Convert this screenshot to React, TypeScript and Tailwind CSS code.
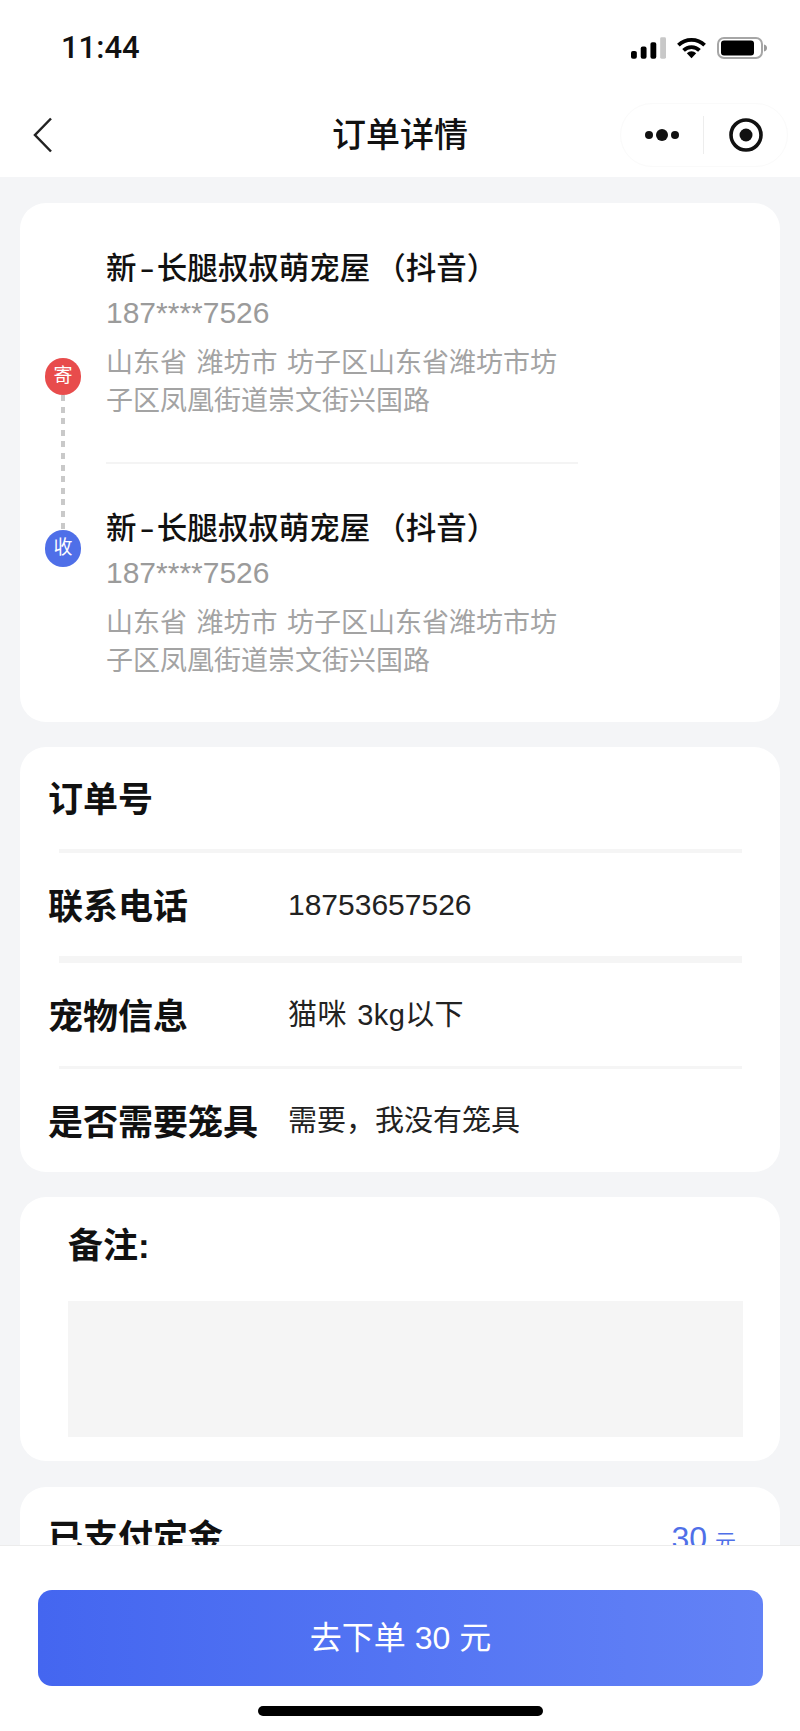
const font = "font-['Liberation_Sans','Noto_Sans_CJK_SC',sans-serif]"

const rows = [
  { label: "订单号", value: "", valueStyle: "text-[29px]", height: "h-[102px]", line: "h-1" },
  { label: "联系电话", value: "18753657526", valueStyle: "text-[30px]", height: "h-[103px]", line: "h-[7px]" },
  { label: "宠物信息", value: "猫咪 3kg以下", valueStyle: "pt-[2px] text-[29px] tracking-[0.4px] [word-spacing:2px]", height: "h-[103px]", line: "h-[3px]" },
  { label: "是否需要笼具", value: "需要，我没有笼具", valueStyle: "pt-[2px] text-[29px]", height: "h-[103px]", line: "" },
]

function StatusIcons() {
  return (
    <div className="flex items-center gap-[11px]">
      <svg width="35" height="22" viewBox="0 0 36 22">
        <rect x="0" y="14" width="6" height="8" rx="2" fill="#000" />
        <rect x="10" y="9.500" width="6" height="12.500" rx="2" fill="#000" />
        <rect x="20" y="5" width="6" height="17" rx="2" fill="#000" />
        <rect x="30" y="0" width="6" height="22" rx="1.500" fill="#c8c8c8" />
      </svg>
      <svg width="29" height="22" viewBox="0 0 31 22">
        <path d="M1.500 8a20 20 0 0 1 28 0" fill="none" stroke="#000" strokeWidth="4" />
        <path d="M7 13.500a12 12 0 0 1 17 0" fill="none" stroke="#000" strokeWidth="4" />
        <path d="M15.500 22l-5-5.500a7 7 0 0 1 10 0z" fill="#000" />
      </svg>
      <svg width="50" height="22" viewBox="0 0 50 22">
        <rect x="1" y="1" width="44" height="20" rx="6" fill="none" stroke="#a6a6a6" strokeWidth="2" />
        <rect x="4" y="3.500" width="33" height="15" rx="3" fill="#000" />
        <path d="M47 7.500c2 .6 3 1.800 3 3.500s-1 2.900-3 3.500z" fill="#9a9a9a" />
      </svg>
    </div>
  )
}

function Capsule() {
  return (
    <div className="flex h-16 w-[168px] items-center rounded-full border border-[#fafafa] bg-white">
      <div className="flex w-[82px] items-center justify-center gap-[3px]">
        <span className="size-2 rounded-full bg-[#111]" />
        <span className="size-3 rounded-full bg-[#111]" />
        <span className="size-2 rounded-full bg-[#111]" />
      </div>
      <div className="h-[38px] w-px bg-[#ededed]" />
      <div className="flex flex-1 items-center justify-center">
        <svg width="34" height="34" viewBox="0 0 34 34">
          <circle cx="17" cy="17" r="15" fill="none" stroke="#111" strokeWidth="3.600" />
          <circle cx="17" cy="17" r="6.500" fill="#111" />
        </svg>
      </div>
    </div>
  )
}

function Address() {
  return (
    <div>
      <div className="text-[30.5px] leading-10 font-medium text-[#111]">
        新<span className="mx-[5px] inline-block scale-x-150">-</span>长腿叔叔萌宠屋
        <span className="ml-[5px]">（</span>抖音）
      </div>
      <div className="mt-[5px] text-[30px] leading-10 text-[#9b9b9b]">187****7526</div>
      <div className="mt-[11px] w-[460px] text-[27px] leading-[38px] text-[#a3a3a3] [word-spacing:2px]">
        山东省 潍坊市 坊子区山东省潍坊市坊子区凤凰街道崇文街兴国路
      </div>
    </div>
  )
}

export default function App() {
  return (
    <div className={`flex h-[1731px] w-[800px] flex-col overflow-hidden bg-[#f4f5f7] ${font}`}>
      <header className="h-[177px] shrink-0 bg-white">
        <div className="flex h-[96px] items-center justify-between pr-[33px] pl-[61px]">
          <span className="font-['Roboto'] text-[31px] font-medium text-[#111]">11:44</span>
          <StatusIcons />
        </div>
        <div className="relative mt-[7px] flex h-16 items-center justify-between pr-3 pl-[33px]">
          <svg width="20" height="36" viewBox="0 0 20 36" fill="none">
            <path d="M18 1.500L2 18l16 16.500" stroke="#222" strokeWidth="2.500" />
          </svg>
          <span className="absolute left-1/2 -translate-x-1/2 text-[34px] font-medium text-[#111]">订单详情</span>
          <Capsule />
        </div>
      </header>

      <main className="min-h-0 flex-1 overflow-hidden pt-[26px] pl-5">
        <div className="flex w-[760px] flex-col gap-[25px]">
          <section className="relative rounded-[26px] bg-white pt-[45px] pb-[42px] pl-[86px]">
            <div className="absolute top-[155px] left-[25px] flex h-[209px] w-9 flex-col items-center">
              <span className="flex h-[37px] w-9 shrink-0 items-center justify-center rounded-full bg-[#e84c4c] text-[19px] text-white">寄</span>
              <span className="w-1 flex-1 bg-[repeating-linear-gradient(to_bottom,#c9c9c9_0,#c9c9c9_6px,transparent_6px,transparent_11.6px)]" />
              <span className="flex h-[37px] w-9 shrink-0 items-center justify-center rounded-full bg-[#4f6fe8] text-[19px] text-white">收</span>
            </div>
            <Address />
            <div className="mt-[42px] mb-11 h-[2px] w-[472px] bg-[#f4f4f4]" />
            <Address />
          </section>

          <section className="h-[425px] rounded-[26px] bg-white">
            {rows.map((row) => (
              <div key={row.label}>
                <div className={`flex items-center pl-7 ${row.height}`}>
                  <span className="w-[240px] shrink-0 pt-[5px] text-[35px] font-semibold text-[#111]">{row.label}</span>
                  <span className={`text-[#222] ${row.valueStyle}`}>{row.value}</span>
                </div>
                {row.line && <div className={`mr-[38px] ml-[39px] bg-[#f5f5f5] ${row.line}`} />}
              </div>
            ))}
          </section>

          <section className="mb-px h-[264px] rounded-[26px] bg-white pt-[29px] pr-[37px] pl-[48px]">
            <div className="text-[35px] leading-10 font-semibold text-[#111]">备注:</div>
            <div className="mt-[35px] h-[136px] bg-[#f5f5f5]" />
          </section>

          <section className="flex h-[120px] items-start justify-between rounded-[26px] bg-white pt-[31px] pr-[44px] pl-7">
            <span className="text-[35px] leading-10 font-semibold text-[#111]">已支付定金</span>
            <span className="flex items-baseline gap-2 leading-10 text-[#4f6fe8]">
              <span className="text-[32px]">30</span>
              <span className="text-[21px]">元</span>
            </span>
          </section>
        </div>
      </main>

      <footer className="relative z-10 h-[186px] shrink-0 border-t border-[#ececec] bg-white pt-11 pr-[37px] pl-[38px]">
        <button className="flex h-[96px] w-full items-center justify-center rounded-[14px] bg-gradient-to-r from-[#4466f0] to-[#6382f6] text-[32px] text-white">
          去下单 30 元
        </button>
        <div className="mx-auto mt-5 h-[10px] w-[285px] rounded-full bg-black" />
      </footer>
    </div>
  )
}
